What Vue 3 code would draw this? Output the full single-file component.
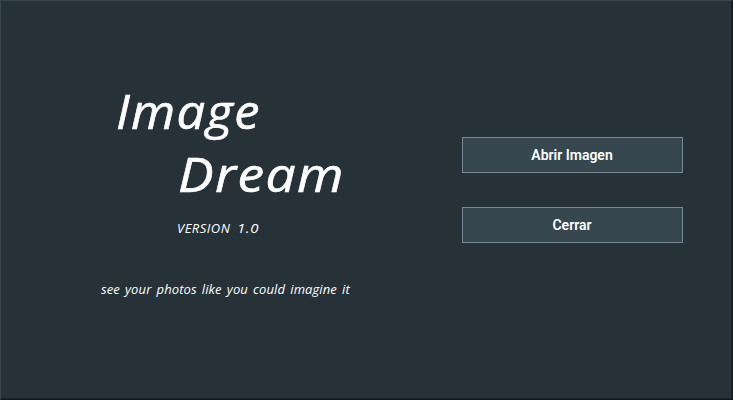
<script setup>
const actions = ['Abrir Imagen', 'Cerrar']
</script>

<template>
  <main class="window">
    <section class="brand">
      <h1 class="title">
        <span class="first">Image</span>
        <span class="second">Dream</span>
      </h1>
      <p class="version">VERSION <span class="number">1.0</span></p>
      <p class="slogan">see your photos like you could imagine it</p>
    </section>
    <nav class="actions">
      <button v-for="label in actions" :key="label" class="action" type="button">{{ label }}</button>
    </nav>
  </main>
</template>

<style>
body {
  margin: 0;
  background: #263238;
}
</style>

<style scoped>
.window {
  box-sizing: border-box;
  width: 733px;
  height: 400px;
  display: flex;
  background: #263238;
  border: 1px solid;
  border-color: #37474f #0d171f #0d171f #37474f;
  box-shadow: inset -1px -1px #1a252c;
  overflow: hidden;
}
.brand {
  width: 461px;
  flex: none;
  color: #fff;
  font-family: "Open Sans", "Noto Sans", sans-serif;
  font-style: italic;
  white-space: nowrap;
}
.title {
  margin: 0;
  padding-top: 78px;
  font-size: 48px;
  font-weight: 500;
  line-height: 63px;
  -webkit-text-stroke: 0.6px #fff;
}
.title span {
  display: block;
  width: max-content;
  transform-origin: left center;
}
.first {
  margin-left: 115px;
  letter-spacing: 1.3px;
  transform: scaleX(1.055);
}
.second {
  margin-left: 177px;
  letter-spacing: 1.3px;
  transform: scaleX(1.11);
}
.version {
  margin: 13px 0 0 176px;
  font-size: 13px;
  line-height: 20px;
  letter-spacing: 0.5px;
}
.number {
  display: inline-block;
  margin-left: 3px;
  transform: scaleX(1.15);
  transform-origin: left center;
}
.slogan {
  margin: 41px 0 0 100px;
  font-size: 13px;
  line-height: 20px;
  letter-spacing: 0.1px;
  word-spacing: 1.7px;
}
.actions {
  display: flex;
  flex-direction: column;
  gap: 34px;
  padding-top: 136px;
}
.action {
  box-sizing: border-box;
  width: 221px;
  height: 36px;
  padding: 0 1px 0 0;
  border: 1px solid #778899;
  background: #37474f;
  color: #fff;
  font: 600 14px/34px Roboto, sans-serif;
}
</style>
